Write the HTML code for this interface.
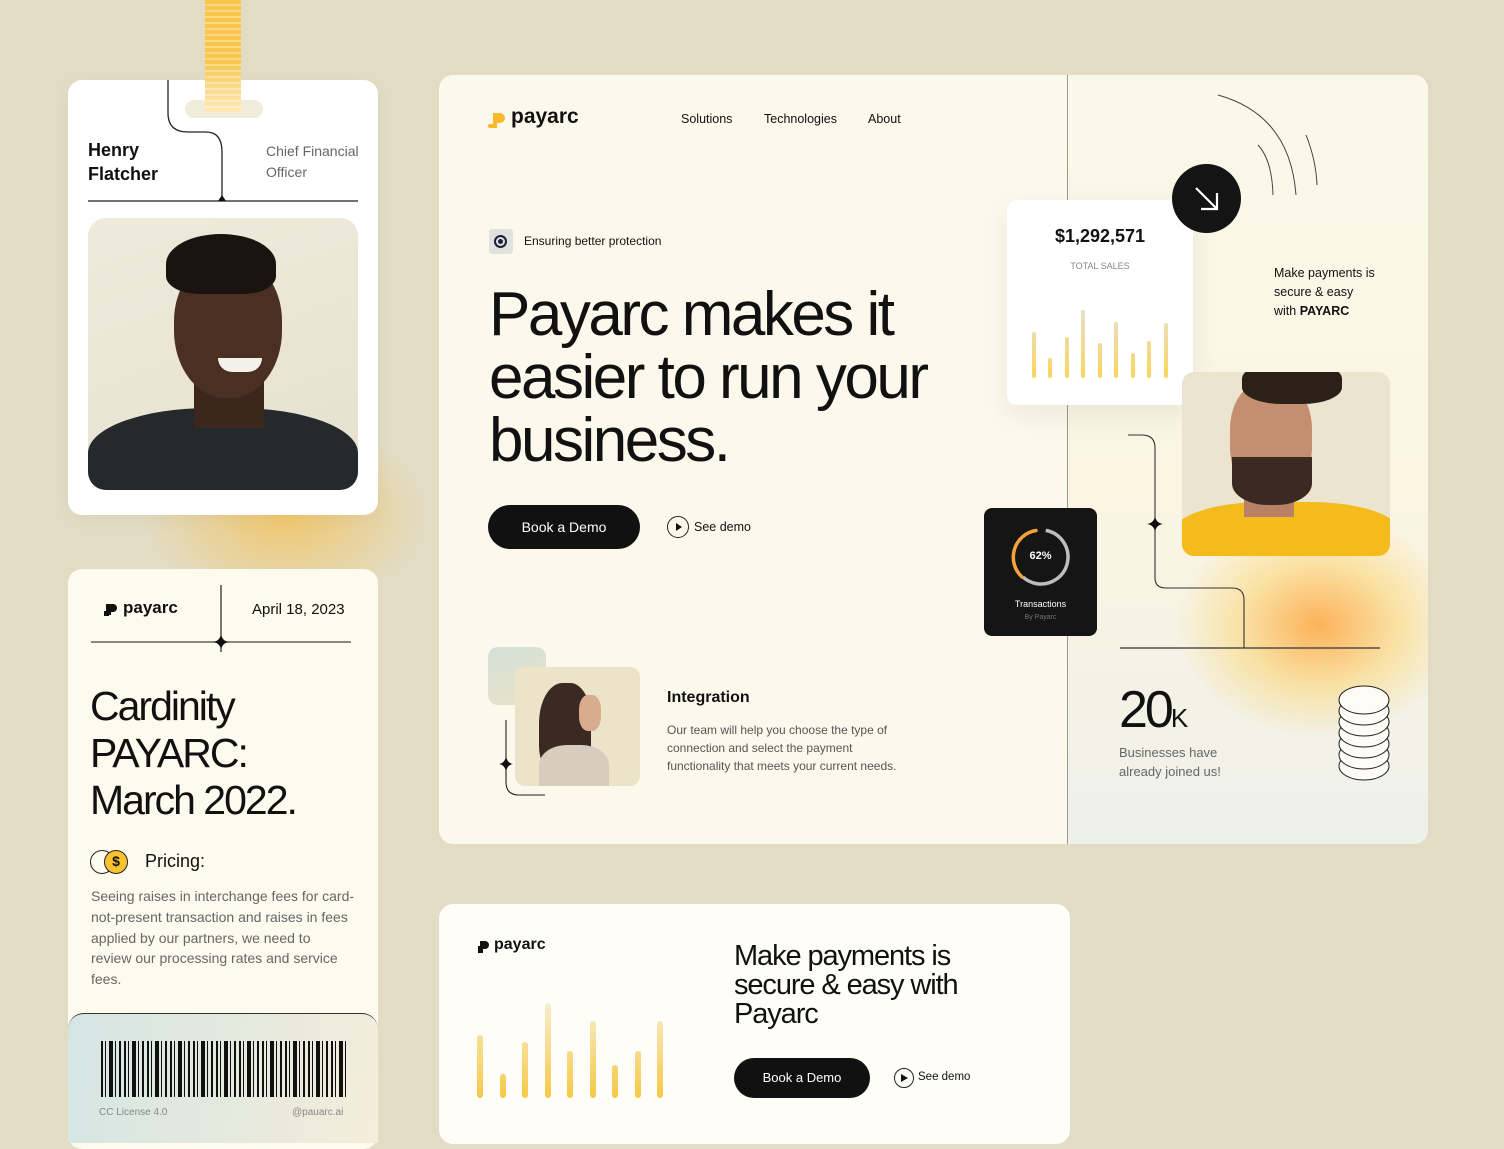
<!DOCTYPE html>
<html><head><meta charset="utf-8"><style>
*{margin:0;padding:0;box-sizing:border-box}
body{width:1504px;height:1128px;overflow:hidden;background:#e2dcc5;font-family:"Liberation Sans",sans-serif;color:#111;position:relative}
.a{position:absolute}
.t{position:absolute;white-space:nowrap}
</style></head><body>

<div class="a" style="left:140px;top:420px;width:290px;height:190px;border-radius:50%;background:radial-gradient(ellipse,rgba(250,185,50,.6),rgba(250,190,60,0) 70%)"></div>

<!-- CARD 1 -->
<div class="a" style="left:68px;top:80px;width:310px;height:435px;background:#fff;border-radius:14px;box-shadow:0 4px 20px rgba(0,0,0,.04)"></div>
<div class="a" style="left:185px;top:100px;width:78px;height:18px;border-radius:9px;background:#f1ecda"></div>
<div class="a" style="left:205px;top:0;width:36px;height:112px;background:repeating-linear-gradient(180deg,#fbc340 0 4px,#fdd978 4px 6px);opacity:.9"></div>
<div class="a" style="left:205px;top:60px;width:36px;height:52px;background:linear-gradient(180deg,rgba(255,255,255,0),rgba(255,255,255,.6))"></div>
<svg class="a" style="left:0;top:0" width="400" height="220"><path d="M168 80 V113 Q168 132 188 132 H206 Q222 132 222 152 V200" fill="none" stroke="#222" stroke-width="1.3"/><line x1="88" y1="201" x2="358" y2="201" stroke="#444" stroke-width="1.6"/><path d="M218 201 L222 195 L226 201Z" fill="#111"/></svg>
<div class="t" style="left:88px;top:138px;font-size:18px;font-weight:bold;line-height:24px">Henry<br>Flatcher</div>
<div class="t" style="left:266px;top:141px;font-size:14px;color:#666;line-height:21px">Chief Financial<br>Officer</div>
<div class="a" style="left:88px;top:218px;width:270px;height:272px;border-radius:18px;background:linear-gradient(160deg,#efeadb,#e6e0cf);overflow:hidden">
  <div class="a" style="left:0;top:190px;width:270px;height:100px;border-radius:45% 45% 0 0;background:#26292b"></div>
  <div class="a" style="left:106px;top:150px;width:70px;height:60px;background:#3d261c"></div>
  <div class="a" style="left:86px;top:40px;width:108px;height:140px;border-radius:45% 45% 48% 48%;background:#4a2f23"></div>
  <div class="a" style="left:78px;top:16px;width:110px;height:60px;border-radius:50% 50% 30% 30%;background:#1a1411"></div>
  <div class="a" style="left:130px;top:140px;width:44px;height:14px;border-radius:0 0 20px 20px;background:#f4f0ea"></div>
</div>

<!-- CARD 2 -->
<div class="a" style="left:68px;top:569px;width:310px;height:580px;background:#fdfaee;border-radius:14px"></div>
<svg class="a" style="left:104px;top:602px" width="16" height="14"><path d="M2 2h7a4 4 0 0 1 0 8H7v3H2z" fill="#111"/><rect x="0" y="9" width="5" height="5" fill="#111"/></svg>
<div class="t" style="left:123px;top:598px;font-size:17px;font-weight:bold">payarc</div>
<div class="t" style="left:252px;top:601px;font-size:15px">April 18, 2023</div>
<svg class="a" style="left:0;top:580px" width="400" height="80"><line x1="91" y1="62" x2="351" y2="62" stroke="#444" stroke-width="1.2"/><line x1="221" y1="5" x2="221" y2="72" stroke="#222" stroke-width="1.2"/><path d="M221 54 Q222 61 229 62 Q222 63 221 70 Q220 63 213 62 Q220 61 221 54Z" fill="#111"/></svg>
<div class="t" style="left:90px;top:683px;font-size:41px;line-height:47px;letter-spacing:-2px">Cardinity<br>PAYARC:<br>March 2022.</div>
<div class="a" style="left:90px;top:850px;width:24px;height:24px;border:1.5px solid #222;border-radius:50%"></div>
<div class="a" style="left:104px;top:850px;width:24px;height:24px;border:1.5px solid #222;border-radius:50%;background:#fbc22f;font-size:14px;text-align:center;line-height:21px;font-weight:bold">$</div>
<div class="t" style="left:145px;top:851px;font-size:18px">Pricing:</div>
<div class="t" style="left:91px;top:886px;font-size:14px;line-height:20.8px;color:#666">Seeing raises in interchange fees for card-<br>not-present transaction and raises in fees<br>applied by our partners, we need to<br>review our processing rates and service<br>fees.</div>
<div class="a" style="left:68px;top:1013px;width:310px;height:130px;border-top:1.5px solid #333;border-radius:16px 16px 0 0;background:linear-gradient(100deg,#d4e6e4,#eaeadc 70%,#f5eddb)"></div>
<div class="a" style="left:101px;top:1041px;width:246px;height:56px;background:repeating-linear-gradient(90deg,#111 0 2px,transparent 2px 4px,#111 4px 5px,transparent 5px 8px,#111 8px 12px,transparent 12px 14px,#111 14px 15px,transparent 15px 18px,#111 18px 20px,transparent 20px 23px)"></div>
<div class="t" style="left:99px;top:1107px;font-size:10px;color:#888">CC License 4.0</div>
<div class="t" style="left:292px;top:1107px;font-size:10px;color:#888">@pauarc.ai</div>

<!-- MAIN -->
<div class="a" style="left:439px;top:75px;width:989px;height:769px;background:#fcf9ec;border-radius:14px;overflow:hidden">
  <div class="a" style="left:628px;top:0;width:361px;height:769px;background:linear-gradient(180deg,#fbf8ea 0%,#fbf5e2 55%,#eef0ea 100%)"></div>
  <div class="a" style="left:740px;top:440px;width:280px;height:220px;border-radius:50%;background:radial-gradient(ellipse,rgba(255,150,30,.7),rgba(255,200,70,.4) 40%,rgba(255,230,150,0) 72%)"></div>
</div>
<div class="a" style="left:1067px;top:75px;width:1px;height:769px;background:#9c9a90"></div>

<svg class="a" style="left:487px;top:112px" width="20" height="18"><path d="M6 1h7a5 5 0 0 1 0 10H10v5H3a2 2 0 0 1 0-4h3z" fill="#fbb829"/></svg>
<div class="t" style="left:511px;top:105px;font-size:21px;font-weight:bold">payarc</div>
<div class="t" style="left:681px;top:112px;font-size:12.5px">Solutions</div>
<div class="t" style="left:764px;top:112px;font-size:12.5px">Technologies</div>
<div class="t" style="left:868px;top:112px;font-size:12.5px">About</div>

<div class="a" style="left:489px;top:229px;width:24px;height:25px;background:#dfe2dd;border-radius:3px"></div>
<div class="a" style="left:494px;top:235px;width:13px;height:13px;border:2px solid #1a1f3a;border-radius:50%"><div class="a" style="left:2px;top:2px;width:5px;height:5px;background:#1a1f3a;border-radius:50%"></div></div>
<div class="t" style="left:524px;top:234px;font-size:12px">Ensuring better protection</div>

<div class="t" style="left:489px;top:283px;font-size:62px;line-height:63px;letter-spacing:-2.5px">Payarc makes it<br>easier to run your<br>business.</div>

<div class="a" style="left:488px;top:505px;width:152px;height:44px;border-radius:22px;background:#111;color:#fff;font-size:14px;text-align:center;line-height:44px">Book a Demo</div>
<div class="a" style="left:667px;top:516px;width:22px;height:22px;border:1.3px solid #222;border-radius:50%"></div>
<svg class="a" style="left:675px;top:523px" width="8" height="8"><path d="M1 0L7 4L1 8Z" fill="#111"/></svg>
<div class="t" style="left:694px;top:520px;font-size:12.5px">See demo</div>

<div class="a" style="left:488px;top:647px;width:58px;height:58px;border-radius:10px;background:linear-gradient(160deg,#d5e0d8,#e8e2c6)"></div>
<div class="a" style="left:515px;top:667px;width:125px;height:119px;border-radius:10px;background:#ebe4c9;overflow:hidden">
  <div class="a" style="left:24px;top:16px;width:52px;height:90px;border-radius:45% 40% 30% 30%;background:#3a2a22"></div>
  <div class="a" style="left:64px;top:28px;width:22px;height:36px;border-radius:40%;background:#d9ab8f"></div>
  <div class="a" style="left:24px;top:78px;width:70px;height:50px;border-radius:40% 40% 0 0;background:#d7ccbd"></div>
</div>
<svg class="a" style="left:495px;top:720px" width="60" height="80"><path d="M11 0 V62 Q11 75 24 75 H50" fill="none" stroke="#222" stroke-width="1.1"/><path d="M11 36 Q12 43 18 44 Q12 45 11 52 Q10 45 4 44 Q10 43 11 36Z" fill="#111"/></svg>
<div class="t" style="left:667px;top:689px;font-size:16px;font-weight:bold">Integration</div>
<div class="t" style="left:667px;top:721px;font-size:12px;line-height:18px;color:#555">Our team will help you choose the type of<br>connection and select the payment<br>functionality that meets your current needs.</div>

<!-- sales card -->
<div class="a" style="left:1007px;top:200px;width:186px;height:205px;background:#fff;border-radius:10px;box-shadow:0 10px 30px rgba(0,0,0,.07)"></div>
<div class="t" style="left:1007px;top:226px;width:186px;text-align:center;font-size:18px;font-weight:bold">$1,292,571</div>
<div class="t" style="left:1007px;top:261px;width:186px;text-align:center;font-size:9px;color:#888">TOTAL SALES</div>
<svg class="a" style="left:1025px;top:300px" width="160" height="82"><defs><linearGradient id="g1" gradientUnits="userSpaceOnUse" x1="0" y1="10" x2="0" y2="78"><stop offset="0" stop-color="#e8e0c8"/><stop offset="1" stop-color="#fbd460"/></linearGradient></defs>
<g stroke="url(#g1)" stroke-width="4" stroke-linecap="round"><line x1="9" y1="34" x2="9" y2="76"/><line x1="25" y1="60" x2="25" y2="76"/><line x1="42" y1="39" x2="42" y2="76"/><line x1="58" y1="12" x2="58" y2="76"/><line x1="75" y1="45" x2="75" y2="76"/><line x1="91" y1="24" x2="91" y2="76"/><line x1="108" y1="55" x2="108" y2="76"/><line x1="124" y1="43" x2="124" y2="76"/><line x1="141" y1="25" x2="141" y2="76"/></g></svg>

<div class="a" style="left:1172px;top:164px;width:69px;height:69px;border-radius:50%;background:#141414"></div>
<svg class="a" style="left:1192px;top:184px" width="30" height="30"><path d="M4 4L25 25M9 25H25V9" fill="none" stroke="#fff" stroke-width="2.2"/></svg>
<svg class="a" style="left:1210px;top:90px" width="120" height="120"><path d="M8 5 Q80 25 86 105" fill="none" stroke="#444" stroke-width="1"/><path d="M48 55 Q62 70 63 105" fill="none" stroke="#444" stroke-width="1"/><path d="M96 45 Q106 70 107 95" fill="none" stroke="#444" stroke-width="1"/></svg>
<div class="t" style="left:1274px;top:264px;font-size:12.5px;line-height:19px">Make payments is<br>secure &amp; easy<br>with <b>PAYARC</b></div>

<div class="a" style="left:1182px;top:372px;width:208px;height:184px;border-radius:12px;background:#ebe4cf;overflow:hidden">
  <div class="a" style="left:-10px;top:130px;width:230px;height:80px;border-radius:40% 40% 0 0;background:#f5bb1c"></div>
  <div class="a" style="left:62px;top:95px;width:50px;height:50px;background:#b98266"></div>
  <div class="a" style="left:48px;top:10px;width:82px;height:118px;border-radius:40% 40% 45% 45%;background:#c48e70"></div>
  <div class="a" style="left:50px;top:85px;width:80px;height:48px;border-radius:0 0 45% 45%;background:#3b2a22"></div>
  <div class="a" style="left:60px;top:-10px;width:100px;height:42px;border-radius:40%;background:#2c2019"></div>
</div>
<svg class="a" style="left:1100px;top:420px" width="300" height="240"><path d="M28 15 H42 Q55 15 55 28 V158 Q55 168 66 168 H132 Q144 168 144 180 V228" fill="none" stroke="#333" stroke-width="1.1"/><line x1="20" y1="228" x2="280" y2="228" stroke="#333" stroke-width="1.2"/><path d="M55 96 Q56 103 63 104 Q56 105 55 112 Q54 105 47 104 Q54 103 55 96Z" fill="#111"/></svg>

<div class="a" style="left:984px;top:508px;width:113px;height:128px;border-radius:8px;background:#151515"></div>
<svg class="a" style="left:1010px;top:526px" width="62" height="62"><circle cx="31" cy="31" r="27" fill="none" stroke="#bdbdbd" stroke-width="3.5" stroke-dasharray="100 200" transform="rotate(-80 31 31)" /><path d="M26 4.5 A27 27 0 0 0 12 51" fill="none" stroke="#f3a33c" stroke-width="3.5" stroke-linecap="round"/></svg>
<div class="t" style="left:984px;top:550px;width:113px;text-align:center;color:#fff;font-size:11px;font-weight:bold">62%</div>
<div class="t" style="left:984px;top:599px;width:113px;text-align:center;color:#fff;font-size:9px">Transactions</div>
<div class="t" style="left:984px;top:614px;width:113px;text-align:center;color:#777;font-size:7px">By Payarc</div>

<div class="t" style="left:1119px;top:680px;font-size:52px;letter-spacing:-3px">20<span style="font-size:26px;letter-spacing:0">K</span></div>
<div class="t" style="left:1119px;top:743px;font-size:13px;line-height:19px;color:#666">Businesses have<br>already joined us!</div>
<svg class="a" style="left:1336px;top:682px" width="58" height="102"><g fill="#fdfcf5" stroke="#222" stroke-width="1">
<ellipse cx="28" cy="84" rx="25" ry="14"/><ellipse cx="28" cy="73" rx="25" ry="14"/><ellipse cx="28" cy="62" rx="25" ry="14"/><ellipse cx="28" cy="51" rx="25" ry="14"/><ellipse cx="28" cy="40" rx="25" ry="14"/><ellipse cx="28" cy="29" rx="25" ry="14"/><ellipse cx="28" cy="18" rx="25" ry="14"/></g></svg>

<!-- BOTTOM CARD -->
<div class="a" style="left:439px;top:904px;width:631px;height:240px;background:#fefdf7;border-radius:14px"></div>
<svg class="a" style="left:477px;top:940px" width="14" height="14"><path d="M3 1h5a4 4 0 0 1 0 8H6v4H1V6h2z" fill="#111"/></svg>
<div class="t" style="left:494px;top:936px;font-size:16px;font-weight:bold">payarc</div>
<svg class="a" style="left:470px;top:1000px" width="200" height="100"><defs><linearGradient id="g2" gradientUnits="userSpaceOnUse" x1="0" y1="4" x2="0" y2="98"><stop offset="0" stop-color="#f7edce"/><stop offset="1" stop-color="#f6c945"/></linearGradient></defs>
<g stroke="url(#g2)" stroke-width="6" stroke-linecap="round"><line x1="10" y1="38" x2="10" y2="95"/><line x1="33" y1="77" x2="33" y2="95"/><line x1="55" y1="45" x2="55" y2="95"/><line x1="78" y1="6" x2="78" y2="95"/><line x1="100" y1="54" x2="100" y2="95"/><line x1="123" y1="24" x2="123" y2="95"/><line x1="145" y1="68" x2="145" y2="95"/><line x1="168" y1="54" x2="168" y2="95"/><line x1="190" y1="24" x2="190" y2="95"/></g></svg>
<div class="t" style="left:734px;top:942px;font-size:29px;line-height:29px;letter-spacing:-1.1px">Make payments is<br>secure &amp; easy with<br>Payarc</div>
<div class="a" style="left:734px;top:1058px;width:136px;height:40px;border-radius:20px;background:#111;color:#fff;font-size:13px;text-align:center;line-height:40px">Book a Demo</div>
<div class="a" style="left:894px;top:1068px;width:20px;height:20px;border:1.3px solid #222;border-radius:50%"></div>
<svg class="a" style="left:901px;top:1074px" width="7" height="8"><path d="M0 0L7 4L0 8Z" fill="#111"/></svg>
<div class="t" style="left:918px;top:1071px;font-size:11.5px">See demo</div>
</body></html>
